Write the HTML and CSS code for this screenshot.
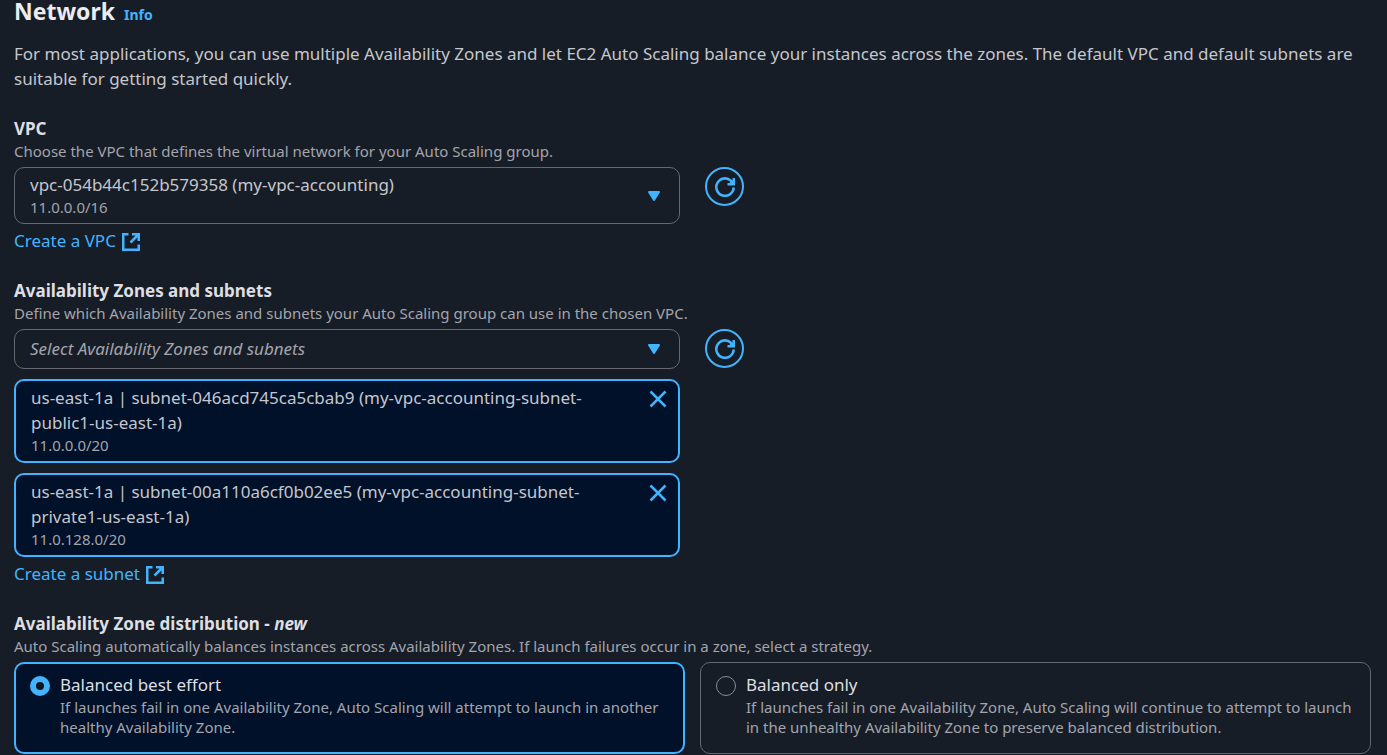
FILE: index.html
```html
<!DOCTYPE html>
<html lang="en">
<head>
<meta charset="utf-8">
<meta name="viewport" content="width=device-width, initial-scale=1">
<title>Network</title>
<link rel="stylesheet" href="styles.css">
</head>
<body>
<svg class="sprite" aria-hidden="true">
  <symbol id="icon-refresh" viewBox="0 0 20 20"><path d="M18.7 10.5A8.7 8.7 0 1 1 15.8 3.6L18 6" /><path d="M12.5 7.2H18.8V1M16.2 3.5V6" /></symbol>
  <symbol id="icon-external" viewBox="0 0 18 18"><path d="M6.5 1.25H1.25V16.75H16.75V11.5M10 1.25H16.75V8M16.5 1.5L8.5 9.5" /></symbol>
  <symbol id="icon-close" viewBox="0 0 18 18"><path d="M1.5 1.5L16.5 16.5M16.5 1.5L1.5 16.5" /></symbol>
  <symbol id="icon-caret" viewBox="0 0 12 10"><path d="M1 1H11L6 9Z" /></symbol>
</svg>
<main class="page">
  <header class="header">
    <h1 class="title">Network</h1>
    <a class="info" href="#info">Info</a>
  </header>
  <p class="intro">For most applications, you can use multiple Availability Zones and let EC2 Auto Scaling balance your instances across the zones. The default VPC and default subnets are suitable for getting started quickly.</p>

  <section class="field">
    <label class="label" for="vpc">VPC</label>
    <p class="hint">Choose the VPC that defines the virtual network for your Auto Scaling group.</p>
    <div class="row">
      <div class="picker">
        <div class="picker-text">
          <select class="select" id="vpc"><option>vpc-054b44c152b579358 (my-vpc-accounting)</option></select>
          <span class="cidr">11.0.0.0/16</span>
        </div>
        <svg class="caret" aria-hidden="true"><use href="#icon-caret"/></svg>
      </div>
      <button class="refresh" type="button" aria-label="Refresh VPCs"><svg class="refresh-icon" aria-hidden="true"><use href="#icon-refresh"/></svg></button>
    </div>
    <a class="link" href="#create-vpc">Create a VPC <svg class="external" aria-hidden="true"><use href="#icon-external"/></svg></a>
  </section>

  <section class="field">
    <label class="label" for="subnets">Availability Zones and subnets</label>
    <p class="hint">Define which Availability Zones and subnets your Auto Scaling group can use in the chosen VPC.</p>
    <div class="row">
      <div class="picker">
        <div class="picker-text">
          <select class="select placeholder" id="subnets"><option>Select Availability Zones and subnets</option></select>
        </div>
        <svg class="caret" aria-hidden="true"><use href="#icon-caret"/></svg>
      </div>
      <button class="refresh" type="button" aria-label="Refresh subnets"><svg class="refresh-icon" aria-hidden="true"><use href="#icon-refresh"/></svg></button>
      <ul class="tokens">
        <li class="token">
          <div class="token-text">us-east-1a | subnet-046acd745ca5cbab9 (my-vpc-accounting-subnet-public1-us-east-1a)<span class="cidr">11.0.0.0/20</span></div>
          <button class="remove" type="button" aria-label="Remove public subnet"><svg class="close" aria-hidden="true"><use href="#icon-close"/></svg></button>
        </li>
        <li class="token">
          <div class="token-text">us-east-1a | subnet-00a110a6cf0b02ee5 (my-vpc-accounting-subnet-private1-us-east-1a)<span class="cidr">11.0.128.0/20</span></div>
          <button class="remove" type="button" aria-label="Remove private subnet"><svg class="close" aria-hidden="true"><use href="#icon-close"/></svg></button>
        </li>
      </ul>
    </div>
    <a class="link" href="#create-subnet">Create a subnet <svg class="external" aria-hidden="true"><use href="#icon-external"/></svg></a>
  </section>

  <section class="field" role="radiogroup" aria-labelledby="distribution">
    <h2 class="label" id="distribution">Availability Zone distribution - <em>new</em></h2>
    <p class="hint">Auto Scaling automatically balances instances across Availability Zones. If launch failures occur in a zone, select a strategy.</p>
    <div class="tiles">
      <label class="tile selected" for="best-effort">
        <input class="radio" type="radio" name="strategy" id="best-effort" checked>
        <span class="tile-text">
          <span class="tile-title">Balanced best effort</span>
          <span class="tile-hint">If launches fail in one Availability Zone, Auto Scaling will attempt to launch in another healthy Availability Zone.</span>
        </span>
      </label>
      <label class="tile" for="balanced-only">
        <input class="radio" type="radio" name="strategy" id="balanced-only">
        <span class="tile-text">
          <span class="tile-title">Balanced only</span>
          <span class="tile-hint">If launches fail in one Availability Zone, Auto Scaling will continue to attempt to launch in the unhealthy Availability Zone to preserve balanced distribution.</span>
        </span>
      </label>
    </div>
  </section>
</main>
</body>
</html>
```
FILE: styles.css
```css
* { box-sizing: border-box; }
body {
  margin: 0;
  background: #161d26;
  color: #c6c6cd;
  font: 17px/25px "Noto Sans", "Open Sans", sans-serif;
}
.sprite { display: none; }
.page { padding: 0 16px 1px 14px; }
.header { display: flex; align-items: baseline; gap: 9px; height: 24px; }
.title { margin: 0; color: #ebebf0; font-size: 23px; line-height: 22px; }
.info { color: #42b4ff; font-size: 14px; font-weight: 700; line-height: 14px; text-decoration: none; }
.intro { margin: 17px 0 0; }
.field { margin-top: 25px; }
.label { display: block; margin: 0; color: #dedee3; font-size: 17px; font-weight: 700; line-height: 25px; }
.hint { margin: 0 0 6px; color: #a4a4ad; font-size: 15px; line-height: 20px; }
.row { display: grid; grid-template-columns: 1fr 1fr; column-gap: 25px; align-items: start; }
.picker {
  display: flex;
  align-items: center;
  gap: 16px;
  min-height: 40px;
  padding: 4px 19px 6px 15px;
  border: 1px solid #656871;
  border-radius: 10px;
}
.picker-text { flex: 1; min-width: 0; }
.select {
  display: block;
  width: 100%;
  height: 25px;
  padding: 0;
  border: 0;
  appearance: none;
  background: transparent;
  color: inherit;
  font: inherit;
}
.placeholder { color: #a4a4ad; font-style: italic; }
.cidr { display: block; color: #a4a4ad; font-size: 15px; line-height: 20px; }
.caret { width: 12px; height: 10px; margin-top: 2px; fill: #42b4ff; stroke: #42b4ff; stroke-width: 2; stroke-linejoin: round; }
.refresh {
  display: grid;
  place-items: center;
  width: 39px;
  height: 39px;
  padding: 0;
  border: 2px solid #42b4ff;
  border-radius: 50%;
  background: transparent;
}
.refresh-icon { width: 20px; height: 20px; fill: none; stroke: #42b4ff; stroke-width: 2.5; }
.link {
  display: inline-flex;
  align-items: center;
  gap: 6px;
  margin-top: 4px;
  color: #42b4ff;
  text-decoration: none;
  vertical-align: top;
}
.external { width: 18px; height: 18px; margin-top: 2px; fill: none; stroke: #42b4ff; stroke-width: 2.5; }
.tokens { display: grid; gap: 10px; margin: 10px 0 0; padding: 0; list-style: none; }
.token {
  display: flex;
  align-items: flex-start;
  gap: 16px;
  padding: 4px 11px 6px 15px;
  border: 2px solid #42b4ff;
  border-radius: 10px;
  background: #001129;
}
.token-text { flex: 1; }
.remove { display: grid; place-items: center; padding: 5px 0; border: 0; background: transparent; }
.close { width: 18px; height: 18px; fill: none; stroke: #42b4ff; stroke-width: 2.5; }
.tiles { display: grid; grid-template-columns: 1fr 1fr; gap: 15px; }
.tile {
  display: flex;
  gap: 10px;
  padding: 9px 15px 16px;
  border: 1px solid #656871;
  border-radius: 10px;
}
.tile.selected { padding: 8px 14px 15px; border: 2px solid #42b4ff; background: #001129; }
.radio {
  flex: none;
  width: 20px;
  height: 20px;
  margin: 4px 0 0;
  border: 1px solid #8c8c94;
  border-radius: 50%;
  appearance: none;
}
.radio:checked { border: 6px solid #42b4ff; background: #0f141a; }
.tile-title, .tile-hint { display: block; }
.tile-title { color: #dedee3; }
.tile-hint { color: #a4a4ad; font-size: 15px; line-height: 20px; }
```
